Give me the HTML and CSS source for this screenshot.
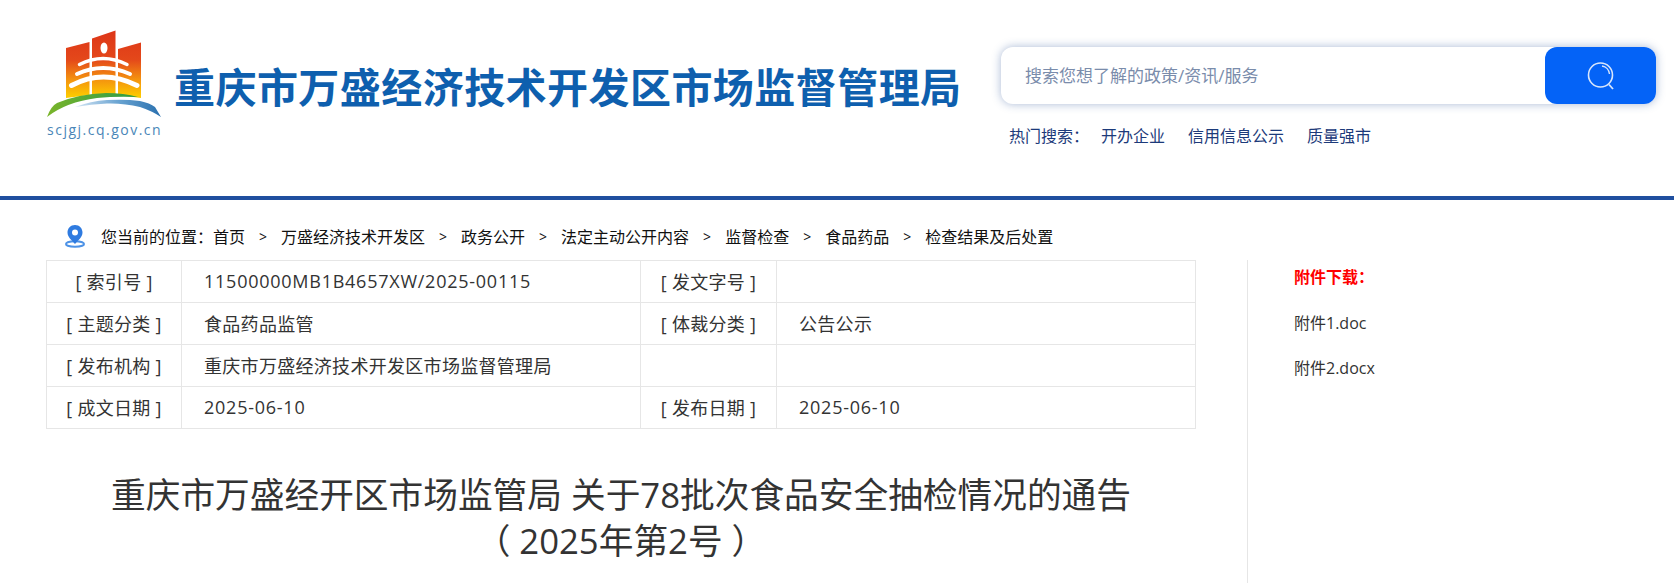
FILE: index.html
```html
<!DOCTYPE html>
<html lang="zh-CN">
<head>
    <meta charset="UTF-8">
    <title>重庆市万盛经开区市场监管局 关于78批次食品安全抽检情况的通告</title>
    <link rel="stylesheet" href="styles.css">
</head>
<body>
<div class="header">
    <div class="logo">
        <svg class="logo-mark" width="116" height="90" viewBox="0 0 116 90">
            <defs>
                <linearGradient id="gate" gradientUnits="userSpaceOnUse" x1="0" y1="0" x2="0" y2="66">
                    <stop offset="0" stop-color="#dd3518"/>
                    <stop offset="0.45" stop-color="#e4481a"/>
                    <stop offset="0.75" stop-color="#f4930f"/>
                    <stop offset="1" stop-color="#fdc900"/>
                </linearGradient>
                <linearGradient id="arc" x1="0" y1="0" x2="1" y2="0">
                    <stop offset="0" stop-color="#d5e6f4"/>
                    <stop offset="0.5" stop-color="#6aa4d2"/>
                    <stop offset="1" stop-color="#2a70ae"/>
                </linearGradient>
                <linearGradient id="leaf" x1="0" y1="0" x2="1" y2="0">
                    <stop offset="0" stop-color="#7ab52a"/>
                    <stop offset="1" stop-color="#2b9a48"/>
                </linearGradient>
            </defs>
            <path d="M20 18 L43.5 12 L43.5 65 L20 68 Z" fill="url(#gate)"/>
            <path d="M46 8.5 L69.5 0.5 L69.5 65 L46 65 Z" fill="url(#gate)"/>
            <path d="M72 19 L95 12.5 L95 68 L72 65 Z" fill="url(#gate)"/>
            <ellipse cx="58" cy="18" rx="3.5" ry="5.5" fill="#fff"/>
            <path d="M33.5 34.5 Q57 22.5 81 34.5" fill="none" stroke="#fff" stroke-width="3.5" stroke-linecap="round"/>
            <path d="M31 44 Q57 32 84 44" fill="none" stroke="#fff" stroke-width="4" stroke-linecap="round"/>
            <path d="M25.5 55.5 Q57 38.5 91 55.5" fill="none" stroke="#fff" stroke-width="5" stroke-linecap="round"/>
            <path d="M1 87 Q5 76 11 73 Q32 64 60 63 Q78 63 92 67 Q70 66 51 68 Q20 72 1 87 Z" fill="url(#leaf)"/>
            <path d="M29 77 Q45 71 61 70 Q80 69 94 71 Q104 73 109 77 L115 87 Q106 81 94 77 Q78 73 61 73.5 Q45 74 29 77 Z" fill="url(#arc)"/>
        </svg>
        <div class="logo-url">scjgj.cq.gov.cn</div>
    </div>
    <div class="site-name">重庆市万盛经济技术开发区市场监督管理局</div>
    <div class="search-area">
        <div class="search-box">
            <div class="search-input">搜索您想了解的政策/资讯/服务</div>
            <div class="search-btn">
                <svg width="32" height="32" viewBox="0 0 32 32" fill="none" stroke="#d8e6fb">
                    <circle cx="15.5" cy="15" r="12" stroke-width="1.6"/>
                    <path d="M17 6 A9 9 0 0 1 24.5 14" stroke-width="1.4"/>
                    <path d="M24 24.5 L28 29" stroke-width="1.8"/>
                </svg>
            </div>
        </div>
        <div class="hot">
            <span class="hot-label">热门搜索：</span>
            <a href="#">开办企业</a>
            <a href="#">信用信息公示</a>
            <a href="#">质量强市</a>
        </div>
    </div>
</div>
<div class="crumbs">
    <svg class="pin" width="20" height="24" viewBox="0 0 20 24">
        <ellipse cx="10" cy="20" rx="9" ry="2.8" fill="none" stroke="#4d92e6" stroke-width="2"/>
        <path d="M10 1 C5.5 1 2.5 4.5 2.5 8.5 C2.5 13 7 16.5 10 20 C13 16.5 17.5 13 17.5 8.5 C17.5 4.5 14.5 1 10 1 Z" fill="#2f7be0"/>
        <circle cx="10" cy="8.5" r="3" fill="#fff"/>
    </svg>
    <span>您当前的位置：首页</span>
    <span class="sep">&gt;</span><span>万盛经济技术开发区</span>
    <span class="sep">&gt;</span><span>政务公开</span>
    <span class="sep">&gt;</span><span>法定主动公开内容</span>
    <span class="sep">&gt;</span><span>监督检查</span>
    <span class="sep">&gt;</span><span>食品药品</span>
    <span class="sep">&gt;</span><span>检查结果及后处置</span>
</div>
<div class="content">
    <div class="main">
        <table class="info">
            <tr>
                <th>[ 索引号 ]</th>
                <td class="num">11500000MB1B4657XW/2025-00115</td>
                <th>[ 发文字号 ]</th>
                <td></td>
            </tr>
            <tr>
                <th>[ 主题分类 ]</th>
                <td>食品药品监管</td>
                <th>[ 体裁分类 ]</th>
                <td>公告公示</td>
            </tr>
            <tr>
                <th>[ 发布机构 ]</th>
                <td>重庆市万盛经济技术开发区市场监督管理局</td>
                <th></th>
                <td></td>
            </tr>
            <tr>
                <th>[ 成文日期 ]</th>
                <td class="num">2025-06-10</td>
                <th>[ 发布日期 ]</th>
                <td class="num">2025-06-10</td>
            </tr>
        </table>
        <h1>重庆市万盛经开区市场监管局 关于78批次食品安全抽检情况的通告<br>（ 2025年第2号 ）</h1>
    </div>
    <div class="side">
        <div class="side-title">附件下载：</div>
        <a href="#">附件1.doc</a>
        <a href="#">附件2.docx</a>
    </div>
</div>
</body>
</html>
```

FILE: styles.css
```css
* { box-sizing: border-box; }
html, body { height: 583px; overflow: hidden; }
body { margin: 0; background: #fff; font-family: "Open Sans", "Noto Sans CJK SC", sans-serif; color: #333; text-spacing-trim: space-all; }
a { text-decoration: none; }

.header { height: 200px; border-bottom: 4px solid #1f4f9f; display: flex; padding: 30px 0 0 46px; }
.logo { width: 118px; flex: none; }
.logo-mark { display: block; }
.logo-url { margin-top: 0; padding-left: 1px; font-size: 14px; line-height: 20px; letter-spacing: 1.5px; color: #4a86b8; white-space: nowrap; }
.site-name { margin: 26px 0 0 10px; width: 797px; font-family: "Noto Sans CJK SC", sans-serif; font-size: 41px; line-height: 58px; font-weight: 700; letter-spacing: 0.45px; color: #0e5fae; white-space: nowrap; }
.search-area { margin: 17px 0 0 30px; width: 655px; }
.search-box { height: 57px; border-radius: 12px; background: #fff; box-shadow: 0 0 10px rgba(40,80,150,0.4); display: flex; justify-content: space-between; }
.search-input { padding-left: 24px; font-size: 17px; line-height: 57px; color: #7a8cab; }
.search-btn { width: 111px; border-radius: 12px; background: #0463f7; display: flex; align-items: center; justify-content: center; }
.hot { margin-top: 20px; padding-left: 8px; font-size: 16px; line-height: 24px; color: #1c3a7a; display: flex; }
.hot-label { width: 92px; }
.hot a { color: #1c3a7a; margin-right: 23px; }

.crumbs { height: 60px; padding: 14px 0 0 65px; display: flex; align-items: center; font-size: 16px; line-height: 24px; color: #111; }
.pin { margin-right: 16px; margin-top: -2px; }
.sep { margin: 0 14px; font-size: 14px; }

.content { display: flex; align-items: stretch; padding-left: 46px; }
.main { width: 1150px; flex: none; }
.info { width: 1150px; border-collapse: collapse; table-layout: fixed; }
.info th, .info td { height: 42px; border: 1px solid #e6e6e6; font-size: 18px; letter-spacing: 0.3px; font-weight: 400; color: #333; padding: 0 0 2px; }
.info th { width: 135px; text-align: center; }
.info th:nth-child(3) { width: 136px; }
.info td { padding-left: 22px; }
.info td:nth-child(2) { width: 459px; }
.info .num { letter-spacing: 0.75px; }
h1 { margin: 43px 0 0; font-size: 34.7px; line-height: 46px; font-weight: 400; text-align: center; color: #333; font-family: "Open Sans", "Noto Sans CJK SC", sans-serif; }
.side { margin-left: 51px; border-left: 1px solid #e6e6e6; padding-left: 46px; height: 324px; }
.side-title { font-size: 16px; line-height: 34px; font-weight: 700; color: #f00; margin-bottom: 12px; }
.side a { display: block; font-size: 16px; line-height: 34px; margin-bottom: 11px; color: #333; }
```
